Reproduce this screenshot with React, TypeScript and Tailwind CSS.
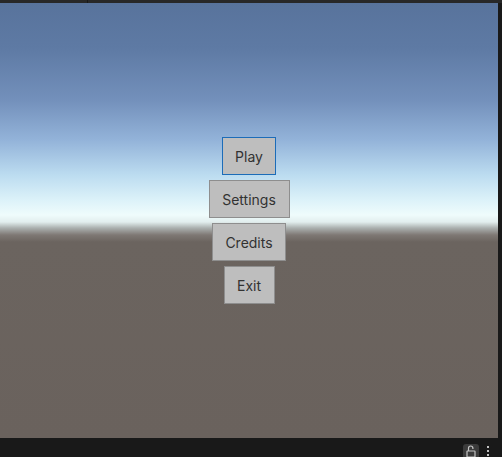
import React from "react";

const buttons = [
  { label: "Play", width: "w-[54px]", selected: true },
  { label: "Settings", width: "w-[81px]", selected: false },
  { label: "Credits", width: "w-[74px]", selected: false },
  { label: "Exit", width: "w-[51px]", selected: false },
];

function MenuButton({ label, width, selected }: { label: string; width: string; selected: boolean }) {
  return (
    <button
      className={`${width} h-[38px] flex items-center justify-center bg-[#bebebe] text-[14px] text-[#323232] border ${
        selected ? "border-[#1c6cb8]" : "border-[#8e8e8e]"
      }`}
    >
      {label}
    </button>
  );
}

function LockIcon() {
  return (
    <svg width="10" height="12" viewBox="0 0 10 12" fill="none" stroke="#c4c4c4" strokeWidth="1.2">
      <path d="M2.5 6V3.2a2.2 2.2 0 0 1 4.4 0V4" />
      <rect x="1" y="6" width="8" height="6" rx="0.5" />
    </svg>
  );
}

export default function App() {
  return (
    <div
      className="w-[502px] h-[457px] flex flex-col bg-[#191919] overflow-hidden"
      style={{ fontFamily: "Inter, 'Noto Sans', sans-serif" }}
    >
      {/* editor tab strip */}
      <div className="h-[3px] flex shrink-0 bg-[#282828]">
        <div className="w-[88px] border-r border-[#191919]" />
      </div>

      <div className="flex flex-1 min-h-0">
        {/* game view: skybox with the main menu */}
        <div className="flex-1 flex flex-col items-center justify-center gap-[5px] bg-[linear-gradient(to_bottom,#58739c_0px,#5e7aa4_45px,#7390bb_97px,#93b3d9_137px,#bcdcf0_172px,#dcf2f9_197px,#effcfc_212px,#e2eeee_219px,#abb0af_225px,#7e7874_232px,#6b645f_239px,#6a625d_100%)]">
          {buttons.map((b) => (
            <MenuButton key={b.label} {...b} />
          ))}
        </div>
        <div className="w-[4px] bg-[#191919]" />
      </div>

      {/* status bar */}
      <div className="h-[19px] shrink-0 flex items-end justify-end pr-[13px] gap-[8px] bg-[#191919]">
        <div className="w-[16px] h-[13px] rounded-t-[3px] bg-[#3b3b3b] flex items-end justify-center">
          <LockIcon />
        </div>
        <div className="flex flex-col gap-[2px] pb-[1px]">
          <span className="w-[2px] h-[2px] bg-[#c4c4c4]" />
          <span className="w-[2px] h-[2px] bg-[#c4c4c4]" />
          <span className="w-[2px] h-[2px] bg-[#c4c4c4]" />
        </div>
      </div>
    </div>
  );
}
